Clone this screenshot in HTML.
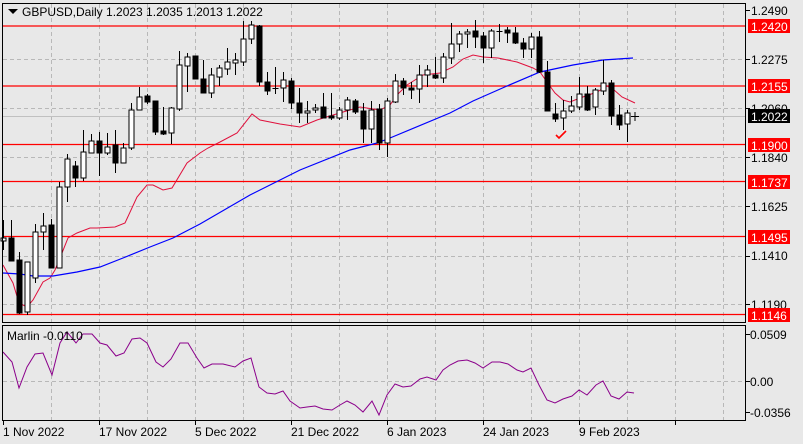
<!DOCTYPE html>
<html><head><meta charset="utf-8">
<style>
html,body{margin:0;padding:0;background:#e8e8e8;}
svg{display:block;font-family:"Liberation Sans",sans-serif;font-size:12px;}
</style></head>
<body>
<svg id="s" width="803" height="444" viewBox="0 0 803 444" xmlns="http://www.w3.org/2000/svg">
<rect width="803" height="444" fill="#e8e8e8"/>
<g id="grid" stroke="#b8b8b8" stroke-dasharray="4,3" stroke-width="1"></g>
<g stroke="#c0c0c0"><line x1="3" y1="116.5" x2="745" y2="116.5"/></g>
<g stroke="#ff0000" stroke-width="1.3">
<line x1="3" y1="26" x2="745" y2="26"/>
<line x1="3" y1="86" x2="745" y2="86"/>
<line x1="3" y1="144.5" x2="745" y2="144.5"/>
<line x1="3" y1="181.5" x2="745" y2="181.5"/>
<line x1="3" y1="236.5" x2="745" y2="236.5"/>
<line x1="3" y1="314.5" x2="745" y2="314.5"/>
</g>
<polyline fill="none" stroke="#e0103c" stroke-width="1" points="3,265 13,283 19,303 27,307 33,300 43,282 50,278 55,270 62,253 68,238 77,233 90,228 97,228 115,227 125,223 137,197 147,185 153,185 163,190 172,188 187,163 200,153 208,148 220,142 237,133 252,114 260,120 280,124 300,127 317,120 333,115 360,107 380,110 390,105 397,95 407,85 423,75 440,73 453,67 463,59 473,55 483,57 498,58 517,62 533,68 540,72 547,82 555,93 563,100 570,102 580,98 597,92 607,86 613,89 622,97 635,103"/>
<polyline fill="none" stroke="#0000ff" stroke-width="1.2" points="3,273 20,274 33,276 53,276 77,272 100,267 123,258 150,247 173,238 200,224 250,195 300,170 350,150 377,143 390,138 450,113 473,101 507,86 540,72 573,65 603,60 633,58"/>
<g id="c"></g>
<path d="M556 135 L559 138 L566 131" fill="none" stroke="#ff0000" stroke-width="1.6"/>
<g stroke="#000"><line x1="631" y1="116.5" x2="639" y2="116.5"/><line x1="635" y1="112" x2="635" y2="121"/></g>
<polyline fill="none" stroke="#8b008b" stroke-width="1" points="3,352 12,362 19,388 27,367 35,354 43,353 52,375 60,343 67,332 76,343 83,334 92,334 100,343 107,345 116,356 124,353 132,339 140,338 147,343 156,362 163,367 171,359 180,343 188,343 197,358 204,368 212,364 223,364 235,367 243,361 251,358 259,387 267,393 275,394 283,391 290,401 300,408 307,407 315,406 323,409 332,410 340,405 347,401 355,405 363,412 372,401 379,415 387,395 395,384 403,387 411,386 420,379 427,377 436,380 443,370 450,365 458,361 467,360 475,363 483,368 492,362 500,362 508,364 517,370 523,372 531,368 539,385 547,400 555,403 563,399 572,396 579,390 587,395 596,385 603,381 611,396 619,399 627,392 634,393"/>
<rect x="2.5" y="3.5" width="743" height="319" fill="none" stroke="#000" stroke-width="1"/>
<rect x="2.5" y="325.5" width="743" height="95" fill="none" stroke="#000" stroke-width="1"/>
<path d="M8 9 L18 9 L13 14 Z" fill="#000"/>
<text x="22" y="16" fill="#000">GBPUSD,Daily  1.2023 1.2035 1.2013 1.2022</text>
<text x="7" y="340" fill="#000">Marlin -0.0110</text>
<g id="ticks" stroke="#000"></g>
<g fill="#000">
<text x="751" y="15">1.2490</text>
<text x="751" y="64">1.2275</text>
<text x="751" y="113">1.2060</text>
<text x="751" y="162">1.1840</text>
<text x="751" y="211">1.1625</text>
<text x="751" y="260">1.1410</text>
<text x="751" y="309">1.1190</text>
<text x="750" y="339">0.0509</text>
<text x="750" y="386">0.00</text>
<text x="750" y="417">-0.0356</text>
</g>
<g fill="#ff0000">
<rect x="748" y="19" width="42" height="14"/><rect x="748" y="79" width="42" height="14"/>
<rect x="748" y="138" width="42" height="14"/><rect x="748" y="175" width="42" height="14"/>
<rect x="748" y="230" width="42" height="14"/><rect x="748" y="308" width="42" height="14"/>
</g>
<rect x="748" y="109" width="42" height="14" fill="#000"/>
<g fill="#fff">
<text x="751" y="31">1.2420</text><text x="751" y="91">1.2155</text>
<text x="751" y="150">1.1900</text><text x="751" y="187">1.1737</text>
<text x="751" y="242">1.1495</text><text x="751" y="320">1.1146</text>
<text x="751" y="121">1.2022</text>
</g>
<g fill="#000">
<text x="3" y="436">1 Nov 2022</text>
<text x="99" y="436">17 Nov 2022</text>
<text x="195" y="436">5 Dec 2022</text>
<text x="291" y="436">21 Dec 2022</text>
<text x="387" y="436">6 Jan 2023</text>
<text x="483" y="436">24 Jan 2023</text>
<text x="579" y="436">9 Feb 2023</text>
</g>
</svg>
<script>
var NS="http://www.w3.org/2000/svg";
function el(t,a,p){var e=document.createElementNS(NS,t);for(var k in a)e.setAttribute(k,a[k]);p.appendChild(e);return e;}
var g=document.getElementById('grid');
for(var x=51;x<745;x+=48){el('line',{x1:x+.5,y1:4,x2:x+.5,y2:322},g);el('line',{x1:x+.5,y1:326,x2:x+.5,y2:420},g);}
[59,108,157,206,256,304].forEach(function(y){el('line',{x1:3,y1:y+.5,x2:745,y2:y+.5},g);});
el('line',{x1:3,y1:381.5,x2:745,y2:381.5},g);
var tk=document.getElementById('ticks');
[10,59,108,157,206,256,304,334,381,412].forEach(function(y){el('line',{x1:746,y1:y+.5,x2:750,y2:y+.5},tk);});
for(var x=3;x<745;x+=96){el('line',{x1:x+.5,y1:421,x2:x+.5,y2:425},tk);}
var d=[[1,238,241,220,250],[0,238,261,220,261],[0,260,313,252,314],[1,262,312,262,315],[1,232,278,224,283],[1,226,232,213,250],[0,225,268,219,268],[1,187,268,182,268],[1,159,187,154,202],[0,166,178,161,187],[1,152,178,130,181],[1,141,153,134,153],[0,141,153,132,176],[1,147,153,133,155],[0,145,163,130,173],[1,148,163,143,163],[1,110,148,103,150],[1,97,110,87,110],[0,96,102,94,104],[0,101,132,101,135],[0,131,134,107,135],[1,108,133,107,144],[1,65,109,51,111],[1,57,66,53,92],[0,56,79,56,79],[0,79,93,60,93],[1,75,93,68,98],[1,68,77,65,86],[1,62,69,48,75],[1,60,63,53,75],[1,39,62,21,66],[1,25,39,21,44],[0,26,82,25,86],[0,82,91,72,95],[2,88,88,67,94],[1,80,88,72,102],[0,81,103,78,109],[0,103,113,88,123],[1,111,113,101,123],[1,108,110,104,113],[0,107,118,93,118],[0,116,118,93,120],[1,110,118,107,120],[1,100,110,97,120],[0,101,112,99,114],[0,111,129,103,143],[1,110,129,101,143],[0,109,143,104,150],[1,101,143,98,157],[1,81,102,74,103],[0,81,88,78,95],[0,88,89,82,99],[1,75,89,65,103],[1,70,75,65,87],[0,75,78,57,79],[1,57,78,53,83],[1,44,58,23,64],[1,34,44,31,52],[1,32,34,29,48],[0,31,37,20,48],[0,36,48,32,63],[1,31,48,29,58],[2,31,31,24,42],[0,30,33,27,43],[0,33,43,27,44],[0,43,49,38,58],[1,37,49,33,58],[0,37,72,31,73],[0,72,111,61,111],[0,114,119,103,122],[1,111,118,100,130],[1,106,111,96,113],[1,94,107,77,110],[0,94,110,86,111],[1,90,107,88,115],[1,83,91,60,95],[0,83,116,80,125],[0,115,125,105,130],[1,113,124,110,142]];
var c=document.getElementById('c');
d.forEach(function(r,i){var x=3+8*i+.5;
el('line',{x1:x,y1:r[3],x2:x,y2:r[4],stroke:'#000'},c);
if(r[0]==2){el('line',{x1:x-3,y1:r[1]+.5,x2:x+3,y2:r[1]+.5,stroke:'#000'},c);}
else{var h=Math.max(r[2]-r[1],2);el('rect',{x:x-2.5,y:r[1],width:5,height:h,fill:r[0]?'#fff':'#000',stroke:'#000'},c);}
});
</script>
</body></html>
